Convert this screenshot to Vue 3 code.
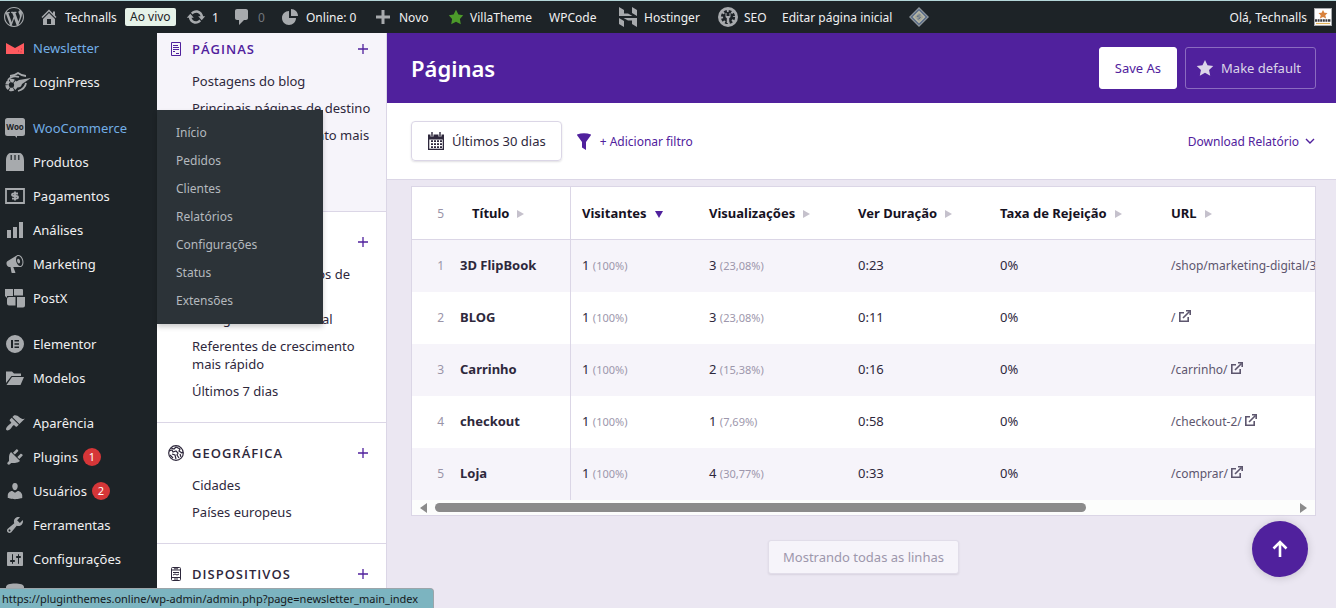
<script setup>
const icons = {
  wordpress: 'M20 10c0-5.51-4.49-10-10-10C4.48 0 0 4.49 0 10c0 5.52 4.48 10 10 10 5.51 0 10-4.48 10-10zM7.78 15.37L4.37 6.22c.55-.02 1.17-.08 1.17-.08.5-.06.44-1.13-.06-1.11 0 0-1.45.11-2.37.11-.18 0-.37 0-.58-.01C4.12 2.69 6.87 1.11 10 1.11c2.33 0 4.45.87 6.05 2.34-.68-.11-1.65.39-1.65 1.58 0 .74.45 1.36.9 2.1.35.61.55 1.36.55 2.46 0 1.49-1.4 5-1.4 5l-3.03-8.37c.54-.02.82-.17.82-.17.5-.05.44-1.25-.06-1.22 0 0-1.44.12-2.38.12-.87 0-2.33-.12-2.33-.12-.5-.03-.56 1.2-.06 1.22l.92.08 1.26 3.41zM17.41 10c.24-.64.74-1.87.43-4.25.7 1.29 1.05 2.71 1.05 4.25 0 3.29-1.73 6.24-4.4 7.78.97-2.59 1.94-5.2 2.92-7.78zM6.1 18.09C3.12 16.65 1.11 13.53 1.11 10c0-1.3.23-2.48.72-3.59C3.25 10.3 4.67 14.2 6.1 18.09zm4.03-6.63l2.58 6.98c-.86.29-1.76.45-2.71.45-.79 0-1.57-.11-2.29-.33.81-2.38 1.62-4.74 2.42-7.1z',
  home: 'M16 8.5l1.53 1.53-1.06 1.06L10 4.6l-6.47 6.49-1.06-1.06L10 2.5l4 4v-2h2v4zm-6-2.46l6 5.99V18H4v-5.97zM12 17v-5H8v5h4z',
  update: 'M10.2 3.28c3.53 0 6.43 2.61 6.92 6h2.08l-3.5 4-3.5-4h2.32c-.45-1.97-2.21-3.45-4.32-3.45-1.45 0-2.73.71-3.54 1.78L4.95 5.66C6.23 4.2 8.11 3.28 10.2 3.28zm-.4 13.44c-3.52 0-6.43-2.61-6.92-6H.8l3.5-4c1.17 1.33 2.33 2.67 3.5 4H5.48c.45 1.97 2.21 3.45 4.32 3.45 1.45 0 2.73-.71 3.54-1.78l1.71 1.95c-1.28 1.46-3.15 2.38-5.25 2.38z',
  comment: 'M5 2h9c1.1 0 2 .9 2 2v7c0 1.1-.9 2-2 2h-2l-5 5v-5H5c-1.1 0-2-.9-2-2V4c0-1.1.9-2 2-2z',
  pie: 'M11 9V2c3.87 0 7 3.13 7 7h-7zM9 4v7h7c0 3.87-3.13 7-7 7s-7-3.13-7-7 3.13-7 7-7z',
  plus: 'M17 8.500v3h-5.500V17h-3v-5.500H3v-3h5.500V3h3v5.500z',
  star: 'M10 1l3 6 6 .75-4.12 4.62L16 19l-6-3-6 3 1.13-6.63L1 7.75 7 7z',
  hostinger: 'M1 0v9h13.500L10 6.500H6V3zM19 20v-9H5.500l4.500 2.500h4V17zM14 0v6l5 3V3zM6 20v-6l-5-3v6z',
  store: 'M1 8.5C1 4 3 1.500 5 1h10c2 .5 4 3 4 7.500V19H1zM5.600 3v5h1.200V3zM9.400 3v5h1.200V3zM13.200 3v5h1.200V3z',
  chart: 'M18 18V2h-4v16h4zm-6 0V7H8v11h4zm-6 0v-8H2v8h4z',
  megaphone: 'M18.15 5.94c.46 1.62.38 3.22-.02 4.48-.42 1.28-1.26 2.18-2.3 2.48-.16.06-.26.06-.4.06-.06.02-.12.02-.18.02-.06.02-.14.02-.22.02h-6.8l2.22 5.5c.02.14-.06.26-.14.34-.08.1-.24.16-.34.16H6.95c-.1 0-.26-.06-.34-.16-.08-.08-.16-.2-.14-.34l-1-5.5H4.25l-.02-.02c-.5.06-1.08-.18-1.54-.62s-.88-1.08-1.06-1.88c-.24-.8-.2-1.56-.02-2.2.18-.62.58-1.08 1.06-1.3l.02-.02 9-5.4c.1-.06.18-.1.24-.16.06-.04.14-.08.24-.12.16-.08.28-.12.5-.18 1.04-.3 2.24.1 3.22.98s1.84 2.24 2.26 3.86zm-2.58 5.98h-.02c.4-.1.74-.34 1.04-.7.58-.7.86-1.76.86-3.04 0-.64-.1-1.3-.28-1.98-.34-1.36-1.02-2.5-1.78-3.24s-1.68-1.1-2.46-.88c-.82.22-1.4.96-1.7 2-.32 1.04-.28 2.36.06 3.72.38 1.36 1 2.5 1.8 3.24.78.74 1.62 1.1 2.48.88zm-2.54-7.08c.22-.04.42-.02.62.04.38.16.76.48 1.02 1s.42 1.2.42 1.78c0 .3-.04.56-.12.8-.18.48-.44.84-.86.94-.34.1-.8-.06-1.14-.4s-.64-.86-.78-1.5c-.18-.62-.12-1.24.02-1.72s.48-.84.82-.94z',
  postx: 'M0 1h8v7H2v2L0 8zM9 1h8q1 0 1 1v5.500H9zM2 11q0-2 2-2h6.500v8.500H4q-2 0-2-2zM12 9h8v8.500q0 2-2 2h-6z',
  elementor: 'M10 1a9 9 0 1 0 0 18 9 9 0 0 0 0-18zM6 6h2v8H6zm3.500 0H14v1.600H9.500zm0 3.200H14v1.600H9.500zm0 3.200H14V14H9.500z',
  folder: 'M1 3.500h6l2 2h7v2.500H6.500L1 15zM7 9h12l-3.500 8H1.500z',
  appearance: 'M14.48 11.06L7.41 3.99l1.5-1.5c.5-.56 2.3-.47 3.51.32 1.21.8 1.43 1.28 2.91 2.1 1.18.64 2.45 1.26 4.45.85zm-.71.71L6.7 4.7 4.93 6.47c-.39.39-.39 1.02 0 1.41l1.06 1.06c.39.39.39 1.03 0 1.42-.6.6-1.43 1.11-2.21 1.69-.35.26-.7.53-1.01.84C1.43 14.23.4 16.08 1.4 17.07c.99 1 2.84-.03 4.18-1.36.31-.31.58-.66.85-1.02.57-.78 1.08-1.61 1.69-2.21.39-.39 1.02-.39 1.41 0l1.06 1.06c.39.39 1.02.39 1.41 0z',
  plugins: 'M13.11 4.36L9.87 7.6 8 5.73l3.24-3.24c.35-.34 1.05-.2 1.56.32.52.51.66 1.21.31 1.55zm-8 1.77l.91-1.12 9.01 9.01-1.19.84c-.71.71-2.63 1.16-3.82 1.16H6.14L4.9 17.26c-.59.59-1.54.59-2.12 0-.59-.58-.59-1.53 0-2.12l1.24-1.24v-3.88c0-1.13.4-3.19 1.09-3.89zm7.26 3.97l3.24-3.24c.34-.35 1.04-.21 1.55.31.52.51.66 1.21.31 1.55l-3.24 3.25z',
  users: 'M10 9.25c-2.27 0-2.73-3.44-2.73-3.44C7 4.02 7.82 2 9.97 2c2.16 0 2.98 2.02 2.71 3.81 0 0-.41 3.44-2.68 3.44zm0 2.57L12.72 10c2.39 0 4.52 2.33 4.52 4.53v2.49s-3.65 1.13-7.24 1.13c-3.65 0-7.24-1.13-7.24-1.13v-2.49c0-2.25 1.94-4.48 4.47-4.48z',
  tools: 'M16.68 9.77c-1.34 1.34-3.3 1.67-4.95.99l-5.41 6.52c-.99.99-2.59.99-3.58 0s-.99-2.59 0-3.57l6.52-5.42c-.68-1.65-.35-3.61.99-4.95 1.28-1.28 3.12-1.62 4.72-1.06l-2.89 2.89 2.82 2.82 2.86-2.87c.53 1.58.18 3.39-1.08 4.65zM3.81 16.21c.4.39 1.04.39 1.43 0 .4-.4.4-1.04 0-1.43-.39-.4-1.03-.4-1.43 0-.39.39-.39 1.03 0 1.43z',
  settings: 'M18 16V4c0-.55-.45-1-1-1H3c-.55 0-1 .45-1 1v12c0 .55.45 1 1 1h14c.55 0 1-.45 1-1zM8 11h1c.55 0 1 .45 1 1s-.45 1-1 1H8v1.5c0 .28-.22.5-.5.5s-.5-.22-.5-.5V13H6c-.55 0-1-.45-1-1s.45-1 1-1h1V5.500c0-.28.22-.5.5-.5s.5.22.5.5V11zm5-2h-1c-.55 0-1-.45-1-1s.45-1 1-1h1V5.500c0-.28.22-.5.5-.5s.5.22.5.5V7h1c.55 0 1 .45 1 1s-.45 1-1 1h-1v5.500c0 .28-.22.5-.5.5s-.5-.22-.5-.5V9z',
  database: 'M1 4c0-2.500 4-3.500 9-3.500s9 1 9 3.500v13H1z'
}

const menuGroups = [
  [
    { label: 'Newsletter', icon: 'newsletter', active: true },
    { label: 'LoginPress', icon: 'loginpress' }
  ],
  [
    { label: 'WooCommerce', icon: 'woo', active: true },
    { label: 'Produtos', icon: 'store' },
    { label: 'Pagamentos', icon: 'money' },
    { label: 'Análises', icon: 'chart' },
    { label: 'Marketing', icon: 'megaphone' },
    { label: 'PostX', icon: 'postx' }
  ],
  [
    { label: 'Elementor', icon: 'elementor' },
    { label: 'Modelos', icon: 'folder' }
  ],
  [
    { label: 'Aparência', icon: 'appearance' },
    { label: 'Plugins', icon: 'plugins', count: 1 },
    { label: 'Usuários', icon: 'users', count: 2 },
    { label: 'Ferramentas', icon: 'tools' },
    { label: 'Configurações', icon: 'settings' },
    { label: '', icon: 'database' }
  ]
]

const submenu = ['Início', 'Pedidos', 'Clientes', 'Relatórios', 'Configurações', 'Status', 'Extensões']

const sections = [
  {
    title: 'PÁGINAS', icon: 'page', active: true,
    items: ['Postagens do blog', 'Principais páginas de destino', 'Páginas de crescimento mais rápido', 'Páginas de saída']
  },
  {
    title: 'REFERENTES', icon: 'link',
    items: ['Principais mecanismos de pesquisa', 'Tráfego de mídia social', 'Referentes de crescimento mais rápido', 'Últimos 7 dias']
  },
  { title: 'GEOGRÁFICA', icon: 'globe', items: ['Cidades', 'Países europeus'] },
  { title: 'DISPOSITIVOS', icon: 'device', items: [] }
]

const columns = ['Título', 'Visitantes', 'Visualizações', 'Ver Duração', 'Taxa de Rejeição', 'URL']

const rows = [
  { title: '3D FlipBook', views: 3, share: '23,08%', time: '0:23', url: '/shop/marketing-digital/3d-flipbook/' },
  { title: 'BLOG', views: 3, share: '23,08%', time: '0:11', url: '/' },
  { title: 'Carrinho', views: 2, share: '15,38%', time: '0:16', url: '/carrinho/' },
  { title: 'checkout', views: 1, share: '7,69%', time: '0:58', url: '/checkout-2/' },
  { title: 'Loja', views: 4, share: '30,77%', time: '0:33', url: '/comprar/' }
]
</script>

<template>
  <div class="page">
    <header class="adminbar">
      <nav class="bar-items" aria-label="Barra de ferramentas">
        <a href="#" aria-label="WordPress"><svg class="ic" viewBox="0 0 20 20"><path :d="icons.wordpress" /></svg></a>
        <a href="#"><svg class="ic" viewBox="0 0 20 20"><path :d="icons.home" /></svg>Technalls</a>
        <a href="#"><span class="live">Ao vivo</span></a>
        <a href="#"><svg class="ic" viewBox="0 0 20 20"><path :d="icons.update" /></svg>1</a>
        <a href="#" class="muted"><svg class="ic" viewBox="0 0 20 20"><path :d="icons.comment" /></svg>0</a>
        <a href="#"><svg class="ic" viewBox="0 0 20 20"><path :d="icons.pie" /></svg>Online: 0</a>
        <a href="#"><svg class="ic" viewBox="0 0 20 20"><path :d="icons.plus" /></svg>Novo</a>
        <a href="#"><svg class="ic villa" viewBox="0 0 20 20"><path :d="icons.star" /></svg>VillaTheme</a>
        <a href="#">WPCode</a>
        <a href="#"><svg class="ic" viewBox="0 0 20 20"><path :d="icons.hostinger" /></svg>Hostinger</a>
        <a href="#">
          <svg class="ic" viewBox="0 0 20 20">
            <circle cx="10" cy="10" r="10" />
            <circle cx="10" cy="10" r="5.600" fill="none" stroke="#1d2327" stroke-width="3" stroke-dasharray="2.600 1.800" />
            <circle cx="10" cy="10" r="5" fill="#1d2327" />
            <path d="M7.500 6v3.500q0 1 1.300 1.500V16h2.400v-5q1.300-.5 1.300-1.500V6h-1v3h-3V6z" />
          </svg>SEO
        </a>
        <a href="#">Editar página inicial</a>
        <a href="#" aria-label="Atalho">
          <svg class="ic" viewBox="0 0 20 20">
            <path d="M10 0l10 10-10 10L0 10z" fill="#8d959b" />
            <path d="M10 2.500l7.500 7.500-7.500 7.500L2.500 10z" fill="none" stroke="#35507c" />
            <path d="M10 4.500l5.500 5.500-5.500 5.500L4.500 10z" fill="#a4a69a" stroke="#c8c6ad" />
            <path d="M11.500 8h-2L8 9.500l3.500.8L10 12H8.500" fill="none" stroke="#5d6f88" />
          </svg>
        </a>
      </nav>
      <a href="#" class="account">Olá, Technalls
        <svg class="avatar" viewBox="0 0 18 18">
          <path d="M0 0h18v18H0z" fill="#a7aaad" />
          <path d="M1 1h16v16H1z" fill="#fff" />
          <path d="M9 2l1.400 2.800 3.100.2-2.200 2.200.8 3.300L9 8.900l-3.100 1.600.8-3.300L4.500 5l3.100-.2z" fill="#d9823c" />
          <path d="M1 12.500h16" stroke="#3b3b40" stroke-width="2.400" stroke-dasharray="2 .6" />
          <path d="M2 15.500h14" stroke="#e3b45c" stroke-width="1.200" />
        </svg>
      </a>
    </header>

    <div class="body">
      <nav class="menu" aria-label="Menu principal">
        <ul v-for="(group, g) in menuGroups" :key="g">
          <li v-for="item in group" :key="item.icon">
            <a href="#" :class="{ active: item.active }" :aria-label="item.label || 'Dados'">
              <svg v-if="item.icon === 'newsletter'" class="ic" viewBox="0 0 20 20">
                <path d="M1 5l9 5 9-5v11H1z" fill="#ff5a5f" />
                <path d="M13 13h1M16 11h1M15.500 14h1" stroke="#b53b45" />
              </svg>
              <svg v-else-if="item.icon === 'loginpress'" class="ic wide" viewBox="0 0 26 20">
                <path d="M5 4q4 0 8-3 4 3 8 3M21 11q-1 6-8 8" fill="none" stroke="#a7aaad" stroke-width="1.800" />
                <circle cx="6.500" cy="13" r="4.500" fill="none" stroke="#a7aaad" stroke-width="3.500" stroke-dasharray="4 .8" />
                <path d="M9 15q0-5 5-7l12-2-9 6q-1 5-8 3z" />
                <path d="M3 8q4-5 11-3" fill="none" stroke="#a7aaad" stroke-width="1.800" />
              </svg>
              <svg v-else-if="item.icon === 'woo'" class="ic" viewBox="0 0 20 20">
                <path d="M2.500 0h15Q20 0 20 2.500v13q0 2.500-2.500 2.500H12v2l-2-2H2.500Q0 18 0 15.500v-13Q0 0 2.500 0z" />
                <text x="10" y="11.500" text-anchor="middle" class="woo">Woo</text>
              </svg>
              <svg v-else-if="item.icon === 'money'" class="ic" viewBox="0 0 20 20">
                <path d="M1 3h18v14H1z" fill="none" stroke="#a7aaad" stroke-width="1.800" />
                <path d="M13 7.500H9q-2 0-2 1.300T9 10h2q2 0 2 1.300t-2 1.300H7M10 5.500v9" fill="none" stroke="#a7aaad" stroke-width="1.800" />
              </svg>
              <svg v-else class="ic" viewBox="0 0 20 20"><path :d="icons[item.icon]" fill-rule="evenodd" /></svg>
              {{ item.label }}
              <span v-if="item.count" class="count">{{ item.count }}</span>
            </a>
          </li>
        </ul>
      </nav>

      <nav class="submenu" aria-label="WooCommerce">
        <a v-for="s in submenu" :key="s" href="#">{{ s }}</a>
      </nav>

      <aside class="reports">
        <div class="reports-scroll">
          <section v-for="s in sections" :key="s.title" :class="{ current: s.active }">
            <h2>
              <svg v-if="s.icon === 'page'" class="sic" viewBox="0 0 16 16" fill="none" stroke="currentColor">
                <path d="M3.500 1.500h9v13h-9zM5 4.500h5M5 6.500h6M5 8.500h6M5 10.500h2M8 12.500h3" />
              </svg>
              <svg v-else-if="s.icon === 'globe'" class="sic" viewBox="0 0 16 16" fill="none" stroke="currentColor">
                <circle cx="8" cy="8" r="7.300" stroke-width="1.200" />
                <path d="M1 6l3-1 1 2 3-1 2 2-1 2 2 3M3 3l3 1 2-2 4 2-1 2 3 2 1-1M4 9l3 1 1 4M12 9l1 3M2 10l3 3" stroke-width="1.200" />
              </svg>
              <svg v-else-if="s.icon === 'device'" class="sic" viewBox="0 0 16 16" fill="none" stroke="currentColor">
                <rect x="3.500" y="1.500" width="9" height="13" rx="1" />
                <path d="M3.500 4h9M3.500 11.500h9M6 2.800h4M5 6.500h6M5 9l2-1 2 1 2-1M6 13h4" />
              </svg>
              <svg v-else class="sic" viewBox="0 0 16 16" fill="none" stroke="currentColor"><path d="M2 14L14 2M8 2h6v6" /></svg>
              {{ s.title }}
              <button type="button" :aria-label="'Adicionar em ' + s.title">
                <svg viewBox="0 0 12 12"><path d="M6 1v10M1 6h10" stroke="#50219d" stroke-width="1.300" /></svg>
              </button>
            </h2>
            <a v-for="i in s.items" :key="i" href="#">{{ i }}</a>
          </section>
        </div>
      </aside>

      <main>
        <div class="titlebar">
          <h1>Páginas</h1>
          <button type="button" class="save">Save As</button>
          <button type="button" class="default">
            <svg viewBox="0 0 20 20"><path d="M10 1l2.800 6 6.400.7-4.700 4.400 1.300 6.500L10 15.400l-5.800 3.200 1.300-6.500L.8 7.700 7.200 7z" fill="#dcd5e8" /></svg>
            Make default
          </button>
        </div>

        <div class="filters">
          <button type="button" class="date">
            <svg viewBox="0 0 16 18">
              <path d="M0 2.500h16V18H0z" fill="#2e283c" />
              <path d="M1.300 7.500h13.400v9.200H1.300z" fill="#fff" />
              <path d="M3 9.200h11M3 12.200h11M3 15.200h11" stroke="#2e283c" stroke-width="1.700" stroke-dasharray="2 1" />
              <path d="M4 0v4.500M12 0v4.500" stroke="#fff" stroke-width="3" />
              <path d="M4 0v4.500M12 0v4.500" stroke="#2e283c" stroke-width="1.400" />
            </svg>
            Últimos 30 dias
          </button>
          <button type="button" class="add">
            <svg viewBox="0 0 14 17"><path d="M0 1.500Q7-1 14 1.500q0 1-1 2L9 9v8l-4-2.500V9L1 3.500Q0 2.500 0 1.500z" fill="#50219d" /></svg>
            + Adicionar filtro
          </button>
          <button type="button" class="download">
            Download Relatório
            <svg viewBox="0 0 10 6"><path d="M1 1l4 4 4-4" fill="none" stroke="#50219d" stroke-width="1.400" /></svg>
          </button>
        </div>

        <div class="content">
          <div class="table-card">
            <div class="table-clip">
              <table>
                <colgroup>
                  <col class="c-num"><col class="c-title"><col class="c-vis"><col class="c-view"><col class="c-dur"><col class="c-rate"><col class="c-url">
                </colgroup>
                <thead>
                  <tr>
                    <th class="num">5</th>
                    <th v-for="(c, i) in columns" :key="c" scope="col" :class="{ title: i === 0 }">
                      {{ c }}<span :class="['sort', { desc: i === 1 }]"></span>
                    </th>
                  </tr>
                </thead>
                <tbody>
                  <tr v-for="(r, i) in rows" :key="r.title">
                    <td class="num">{{ i + 1 }}</td>
                    <td class="title">{{ r.title }}</td>
                    <td>1 <small>(100%)</small></td>
                    <td>{{ r.views }} <small>({{ r.share }})</small></td>
                    <td>{{ r.time }}</td>
                    <td>0%</td>
                    <td class="url">
                      <a href="#">{{ r.url }}
                        <svg viewBox="0 0 12 12" fill="none" stroke="#5d566e" stroke-width="1.600">
                          <path d="M5 2.800H.8v8.400h8.400V7M4 8l6.500-6.500" /><path d="M7 .8h4.200V5" />
                        </svg>
                      </a>
                    </td>
                  </tr>
                </tbody>
              </table>
            </div>
            <div class="scrollbar">
              <span class="arrow left"></span>
              <div class="track"><div class="thumb"></div></div>
              <span class="arrow right"></span>
            </div>
          </div>
          <button type="button" class="all" disabled>Mostrando todas as linhas</button>
        </div>
      </main>
    </div>

    <button type="button" class="fab" aria-label="Voltar ao topo">
      <svg viewBox="0 0 16 18"><path d="M8 17V2.500M1.500 8.500L8 2l6.500 6.500" fill="none" stroke="#fff" stroke-width="2.600" /></svg>
    </button>
    <div class="status">https://pluginthemes.online/wp-admin/admin.php?page=newsletter_main_index</div>
  </div>
</template>

<style>
html, body, #app { height: 100%; }
body { margin: 0; }
</style>

<style scoped>
* { box-sizing: border-box; }
.page {
  height: 100vh;
  display: flex;
  flex-direction: column;
  overflow: hidden;
  position: relative;
  font-family: "Noto Sans", "Open Sans", sans-serif;
  font-size: 13px;
  color: #2e283c;
  background: #ebe7f2;
}
a { color: inherit; text-decoration: none; }
button { font: inherit; cursor: pointer; }
ul { list-style: none; margin: 0; padding: 0; }
.ic { width: 20px; height: 20px; fill: #a7aaad; flex: none; }

.adminbar {
  flex: none;
  display: flex;
  justify-content: space-between;
  height: 33px;
  border-top: 1px solid #b3d6d8;
  background: #1d2327;
  color: #f0f0f1;
  font-size: 12px;
}
.bar-items {
  display: grid;
  grid-template-columns: 35px 86px 61px 46px 48px 93px 75px 101px 69px 100px 64px 127px 20px;
  padding-left: 4px;
}
.adminbar a { display: flex; align-items: center; gap: 6px; white-space: nowrap; }
.adminbar .muted { color: #71767c; }
.adminbar .villa { fill: #4c9a2a; width: 16px; height: 16px; }
.live { background: #e6f2e8; color: #1d2327; border-radius: 2px; line-height: 18px; padding: 0 5px; }
.adminbar .account { padding-right: 4px; gap: 7px; }
.avatar { width: 18px; height: 18px; }

.body { flex: 1; min-height: 0; display: flex; position: relative; }

.menu {
  flex: none;
  width: 157px;
  background: #1d2327;
  color: #f0f0f1;
  overflow: hidden;
}
.menu ul { margin-bottom: 12px; }
.menu ul:first-child { margin-top: -2px; }
.menu ul:nth-child(3) { margin-bottom: 11px; }
.menu a { display: flex; align-items: center; height: 34px; padding-left: 5px; gap: 8px; white-space: nowrap; }
.menu .wide { width: 26px; margin-right: -6px; }
.menu .active { color: #72aee6; }
.woo { font: bold 8px "Open Sans", sans-serif; fill: #1d2327; }
.menu .count {
  width: 18px;
  height: 18px;
  margin-left: -3px;
  border-radius: 50%;
  background: #d63638;
  color: #fff;
  font-size: 11px;
  line-height: 18px;
  text-align: center;
}

.submenu {
  position: absolute;
  left: 157px;
  top: 77px;
  z-index: 2;
  width: 166px;
  padding: 9px 0;
  background: #2c3338;
  color: #b4b9be;
  font-size: 12px;
  box-shadow: 0 3px 5px rgba(0, 0, 0, 0.2);
}
.submenu a { display: block; line-height: 28px; padding-left: 19px; }

.reports {
  flex: none;
  width: 230px;
  overflow: hidden;
  background: #fff;
  border-right: 1px solid #dbd6e6;
}
.reports-scroll { margin-top: -14px; }
.reports section { padding: 19px 10px 22px 35px; border-bottom: 1px solid #dbd6e6; }
.reports .current { background: #f6f4fa; }
.reports h2 {
  display: flex;
  align-items: center;
  gap: 8px;
  margin: 0 0 12px -24px;
  font-family: "Open Sans", "Noto Sans", sans-serif;
  font-size: 13px;
  line-height: 22px;
  font-weight: 600;
  letter-spacing: 1px;
}
.reports .current h2 { color: #50219d; }
.sic { width: 16px; height: 16px; flex: none; }
.reports h2 button { margin-left: auto; margin-right: 7px; padding: 0; border: 0; background: none; display: flex; }
.reports h2 button svg { width: 12px; height: 12px; }
.reports section > a { display: block; line-height: 18px; margin-bottom: 9px; }
.reports section > a:last-child { margin-bottom: 0; }

main { flex: 1; min-width: 0; display: flex; flex-direction: column; }
.titlebar {
  flex: none;
  display: flex;
  align-items: center;
  gap: 8px;
  height: 70px;
  padding: 0 20px 0 24px;
  background: #50219d;
}
h1 { margin: 0 auto 0 0; font-size: 22px; line-height: 32px; font-weight: 600; color: #fff; }
.titlebar button { height: 42px; border-radius: 3px; border: 1px solid #fff; padding: 0 15px; white-space: nowrap; }
.save { background: #fff; color: #50219d; }
.titlebar .default { display: flex; align-items: center; gap: 7px; padding: 0 14px 0 10px; border-color: #8b6bc0; background: none; color: #dcd5e8; }
.default svg { width: 18px; height: 18px; }

.filters {
  flex: none;
  display: flex;
  align-items: center;
  gap: 15px;
  height: 77px;
  padding: 0 21px 0 24px;
  background: #fff;
  border-bottom: 1px solid #dbd6e6;
}
.filters button { display: flex; align-items: center; gap: 8px; border: 0; padding: 0; background: none; color: #50219d; white-space: nowrap; }
.filters .date {
  height: 40px;
  padding: 0 15px 0 16px;
  border: 1px solid #dbd6e6;
  border-radius: 4px;
  color: #2e283c;
  box-shadow: 0 1px 2px rgba(46, 40, 60, 0.15);
}
.date svg { width: 16px; height: 18px; }
.add svg { width: 14px; height: 17px; }
.filters .add, .filters .download { font-size: 12px; }
.filters .add { gap: 9px; }
.filters .download { margin-left: auto; gap: 6px; }
.download svg { width: 10px; height: 6px; }

.content { flex: 1; display: flex; flex-direction: column; align-items: center; padding: 6px 20px 0 24px; }
.table-card { width: 100%; border: 1px solid #dbd6e6; background: #fff; }
.table-clip { overflow: hidden; }
table { table-layout: fixed; width: 997px; min-width: 100%; border-collapse: separate; border-spacing: 0; }
.c-num { width: 37px; }
.c-title { width: 122px; }
.c-vis { width: 127px; }
.c-view { width: 149px; }
.c-dur { width: 142px; }
.c-rate { width: 171px; }
.c-url { width: 249px; }
th, td { height: 52px; padding: 0 0 0 11px; text-align: left; white-space: nowrap; }
td { padding-bottom: 2px; }
th { height: 53px; color: #16121f; font-weight: 700; border-bottom: 1px solid #dbd6e6; }
tbody tr:nth-child(odd) { background: #f6f4fa; }
.num { padding-left: 0; padding-right: 5px; text-align: right; color: #9a94a8; font-size: 12px; font-weight: 400; }
.title { border-right: 1px solid #dbd6e6; font-weight: 700; }
th.title { padding-left: 23px; }
small { font-size: 11px; color: #9d97ac; }
.sort {
  display: inline-block;
  margin-left: 8px;
  border: solid transparent;
  border-width: 4px 0 4px 7px;
  border-left-color: #c5c1cc;
}
.sort.desc { border-width: 7px 4px 0; border-color: #50219d transparent transparent; }
.url { color: #5d566e; font-size: 12px; }
.url svg { width: 12px; height: 12px; }

.scrollbar { display: flex; align-items: center; height: 15px; padding: 0 8px; gap: 8px; background: #fcfdfc; }
.track { flex: 1; }
.thumb { width: 76%; height: 9px; border-radius: 5px; background: #8b8b8b; }
.arrow { border: solid transparent; border-width: 5px 0; }
.left { border-right: 7px solid #8b8b8b; }
.right { border-left: 7px solid #8b8b8b; }

.all {
  margin-top: 24px;
  height: 34px;
  padding: 0 14px;
  border: 1px solid #e1dde9;
  border-radius: 3px;
  background: #f6f4fa;
  color: #9d97ac;
  box-shadow: 0 1px 2px rgba(46, 40, 60, 0.1);
}

.fab {
  position: absolute;
  right: 28px;
  bottom: 31px;
  display: flex;
  align-items: center;
  justify-content: center;
  width: 56px;
  height: 56px;
  border: 0;
  border-radius: 50%;
  background: #50219d;
  box-shadow: 0 1px 9px rgba(0, 0, 0, 0.16);
}
.fab svg { width: 16px; height: 18px; }

.status {
  position: absolute;
  left: 0;
  bottom: 0;
  z-index: 3;
  padding: 0 15px 0 2px;
  border-top-right-radius: 4px;
  border: 1px solid #9ba5aa;
  border-width: 1px 1px 0 0;
  background: #7cb4c0;
  color: #14181b;
  font-size: 11px;
  line-height: 19px;
}
</style>
